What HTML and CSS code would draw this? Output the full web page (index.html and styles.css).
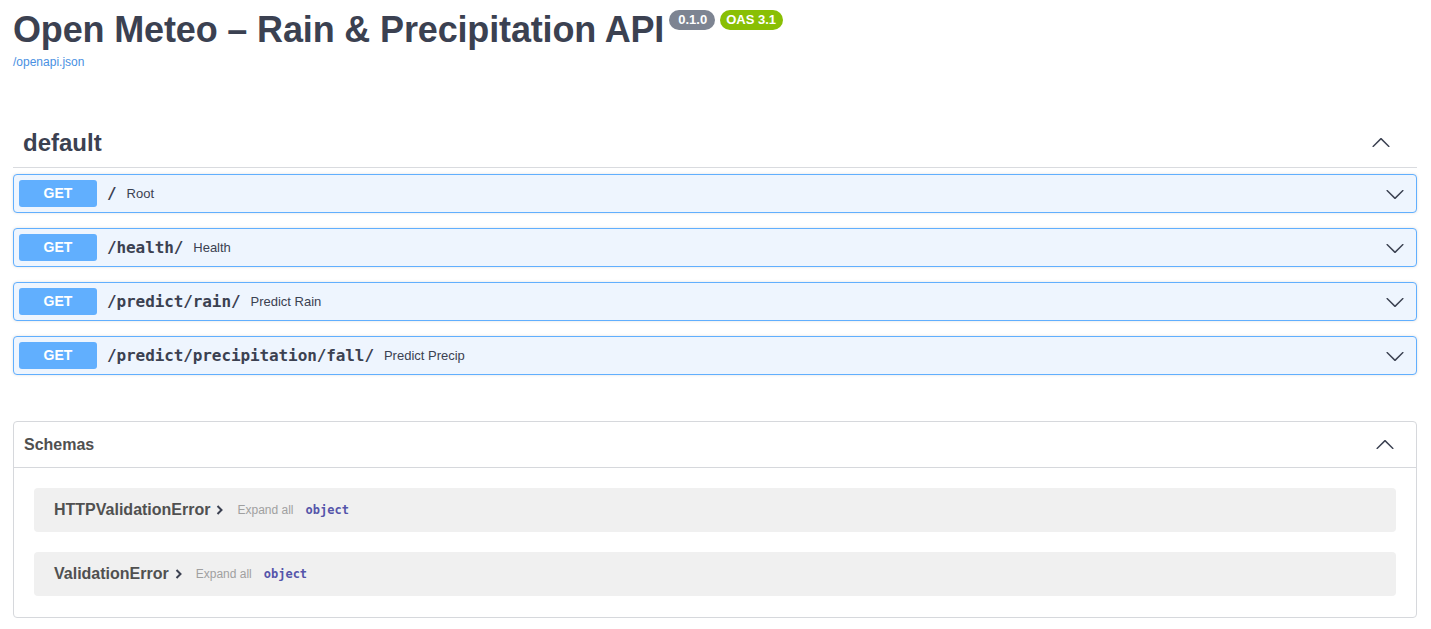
FILE: index.html
```html
<!DOCTYPE html>
<html lang="en">
<head>
    <meta charset="UTF-8">
    <meta name="viewport" content="width=device-width, initial-scale=1.0">
    <title>Open Meteo – Rain &amp; Precipitation API</title>
    <link rel="stylesheet" href="styles.css">
</head>
<body>
    <div class="wrapper">
        <div class="info">
            <div class="title-row">
                <h2 class="title">Open Meteo – Rain &amp; Precipitation API</h2>
                <span class="badge badge-version">0.1.0</span>
                <span class="badge badge-oas">OAS 3.1</span>
            </div>
            <a class="spec-link" href="#">/openapi.json</a>
        </div>

        <div class="tag-section">
            <h3 class="tag-header">
                <span>default</span>
                <svg class="arrow" width="20" height="20" viewBox="0 0 20 20"><path d="M17.418 6.109c.272-.268.709-.268.979 0s.271.701 0 .969l-7.908 7.83c-.27.268-.707.268-.979 0l-7.908-7.83c-.27-.268-.27-.701 0-.969.271-.268.709-.268.979 0L10 13.25l7.418-7.141z" transform="rotate(180 10 10)"/></svg>
            </h3>

            <div class="opblock">
                <span class="method">GET</span>
                <span class="path">/</span>
                <span class="summary">Root</span>
                <svg class="arrow op-arrow" width="20" height="20" viewBox="0 0 20 20"><path d="M17.418 6.109c.272-.268.709-.268.979 0s.271.701 0 .969l-7.908 7.83c-.27.268-.707.268-.979 0l-7.908-7.83c-.27-.268-.27-.701 0-.969.271-.268.709-.268.979 0L10 13.25l7.418-7.141z"/></svg>
            </div>
            <div class="opblock">
                <span class="method">GET</span>
                <span class="path">/health/</span>
                <span class="summary">Health</span>
                <svg class="arrow op-arrow" width="20" height="20" viewBox="0 0 20 20"><path d="M17.418 6.109c.272-.268.709-.268.979 0s.271.701 0 .969l-7.908 7.83c-.27.268-.707.268-.979 0l-7.908-7.83c-.27-.268-.27-.701 0-.969.271-.268.709-.268.979 0L10 13.25l7.418-7.141z"/></svg>
            </div>
            <div class="opblock">
                <span class="method">GET</span>
                <span class="path">/predict/rain/</span>
                <span class="summary">Predict Rain</span>
                <svg class="arrow op-arrow" width="20" height="20" viewBox="0 0 20 20"><path d="M17.418 6.109c.272-.268.709-.268.979 0s.271.701 0 .969l-7.908 7.83c-.27.268-.707.268-.979 0l-7.908-7.83c-.27-.268-.27-.701 0-.969.271-.268.709-.268.979 0L10 13.25l7.418-7.141z"/></svg>
            </div>
            <div class="opblock">
                <span class="method">GET</span>
                <span class="path">/predict/precipitation/fall/</span>
                <span class="summary">Predict Precip</span>
                <svg class="arrow op-arrow" width="20" height="20" viewBox="0 0 20 20"><path d="M17.418 6.109c.272-.268.709-.268.979 0s.271.701 0 .969l-7.908 7.83c-.27.268-.707.268-.979 0l-7.908-7.83c-.27-.268-.27-.701 0-.969.271-.268.709-.268.979 0L10 13.25l7.418-7.141z"/></svg>
            </div>
        </div>

        <section class="models">
            <h4 class="models-header">
                <span>Schemas</span>
                <svg class="arrow" width="20" height="20" viewBox="0 0 20 20"><path d="M17.418 6.109c.272-.268.709-.268.979 0s.271.701 0 .969l-7.908 7.83c-.27.268-.707.268-.979 0l-7.908-7.83c-.27-.268-.27-.701 0-.969.271-.268.709-.268.979 0L10 13.25l7.418-7.141z" transform="rotate(180 10 10)"/></svg>
            </h4>
            <div class="models-body">
                <div class="model">
                    <span class="model-title">HTTPValidationError</span>
                    <svg class="model-toggle" width="8" height="12" viewBox="0 0 8 12"><path d="M1.5 2l4 4-4 4" fill="none" stroke="#3b4151" stroke-width="2"/></svg>
                    <span class="expand">Expand all</span>
                    <span class="type">object</span>
                </div>
                <div class="model">
                    <span class="model-title">ValidationError</span>
                    <svg class="model-toggle" width="8" height="12" viewBox="0 0 8 12"><path d="M1.5 2l4 4-4 4" fill="none" stroke="#3b4151" stroke-width="2"/></svg>
                    <span class="expand">Expand all</span>
                    <span class="type">object</span>
                </div>
            </div>
        </section>
    </div>
</body>
</html>
```

FILE: styles.css
```css
body {
    margin: 0;
    font-family: "Liberation Sans", Arial, sans-serif;
    color: #3b4151;
    background: #fff;
}

.wrapper {
    padding: 0 14px 0 13px;
}

.info {
    padding-top: 6px;
}

.title-row {
    display: flex;
    align-items: flex-start;
}

.title {
    margin: 0;
    font-size: 36px;
    line-height: 48px;
    font-weight: bold;
    letter-spacing: -0.15px;
    color: #3b4151;
}

.badge {
    margin-top: 4px;
    margin-left: 5px;
    padding: 0 6px;
    height: 20px;
    line-height: 20px;
    border-radius: 10px;
    font-size: 13px;
    font-weight: bold;
    color: #fff;
}

.badge-version {
    padding: 0 8px 0 9px;
    background: #7d8492;
}

.badge-oas {
    padding: 0 7px 0 6px;
    background: #89bf04;
}

.spec-link {
    display: block;
    margin-top: 0;
    font-size: 12px;
    line-height: 16px;
    color: #4990e2;
    text-decoration: none;
}

.tag-section {
    margin-top: 49px;
}

.tag-header {
    display: flex;
    align-items: center;
    justify-content: space-between;
    margin: 0 0 6px;
    padding: 10px 26px 10px 10px;
    border-bottom: 1px solid #d9dbdf;
    font-size: 24px;
    line-height: 28px;
}

.arrow {
    fill: #3b4151;
}

.opblock {
    display: flex;
    align-items: center;
    margin-bottom: 15px;
    padding: 5px;
    border: 1px solid #61affe;
    border-radius: 4px;
    background: #eef5fe;
    box-shadow: 0 0 3px rgba(0, 0, 0, 0.12);
}

.method {
    min-width: 78px;
    height: 27px;
    line-height: 27px;
    border-radius: 3px;
    background: #61affe;
    color: #fff;
    font-size: 14px;
    font-weight: bold;
    text-align: center;
}

.path {
    padding: 0 10px;
    font-family: "DejaVu Sans Mono", monospace;
    font-size: 16px;
    font-weight: bold;
    letter-spacing: -0.1px;
    color: #3b4151;
}

.summary {
    flex: 1;
    font-size: 13px;
    color: #3b4151;
}

.op-arrow {
    margin-right: 6px;
}

.models {
    margin-top: 46px;
    border: 1px solid #d6d8dc;
    border-radius: 4px;
}

.models-header {
    display: flex;
    align-items: center;
    justify-content: space-between;
    margin: 0;
    padding: 0 21px 0 10px;
    height: 45px;
    border-bottom: 1px solid #d6d8dc;
    font-size: 16px;
    color: #505050;
}

.models-body {
    padding: 20px 20px 21px;
}

.model {
    display: flex;
    align-items: center;
    height: 44px;
    padding: 0 20px;
    margin-bottom: 20px;
    border-radius: 4px;
    background: #f0f0f0;
}

.model:last-child {
    margin-bottom: 0;
}

.model-title {
    font-size: 16px;
    font-weight: bold;
    color: #505050;
}

.model-toggle {
    margin-left: 6px;
}

.expand {
    margin-left: 13px;
    font-size: 12px;
    color: #a0a0a0;
}

.type {
    margin-left: 12px;
    font-family: "DejaVu Sans Mono", monospace;
    font-size: 12px;
    font-weight: bold;
    color: #55a;
}
```
